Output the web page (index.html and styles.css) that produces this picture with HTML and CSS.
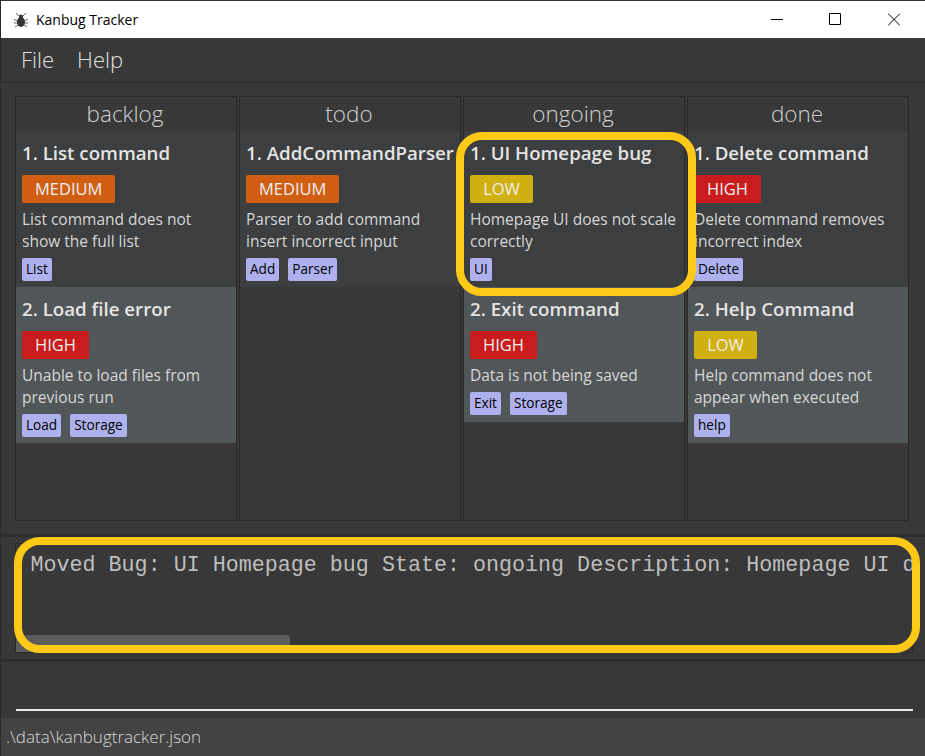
FILE: index.html
```html
<!DOCTYPE html>
<html lang="en">
  <head>
    <meta charset="UTF-8" />
    <title>Kanbug Tracker</title>
    <link rel="stylesheet" href="styles.css">
  </head>
  <body>
    <div class="window">
      <div class="titlebar">
        <svg class="bug" width="16" height="16" viewBox="0 0 16 16">
          <ellipse cx="8" cy="10" rx="4" ry="5" fill="#333" />
          <circle cx="8" cy="4.5" r="2" fill="#333" />
          <path d="M3 1l3 3M13 1l-3 3M1 7l3 2M15 7l-3 2M1 11h3M15 11h-3M2 15l3-2M14 15l-3-2" stroke="#666" stroke-width="1" fill="none" />
        </svg>
        <span class="title">Kanbug Tracker</span>
        <div class="controls">
          <svg width="12" height="13" viewBox="0 0 12 13"><path d="M0 6.5h12" stroke="#000" fill="none" /></svg>
          <svg width="13" height="13" viewBox="0 0 13 13"><path d="M.5.5h11v11h-11z" stroke="#000" fill="none" /></svg>
          <svg width="12" height="13" viewBox="0 0 12 13"><path d="M0 .5l12 12M12 .5l-12 12" stroke="#000" fill="none" /></svg>
        </div>
      </div>

      <div class="menubar">
        <span>File</span>
        <span>Help</span>
      </div>

      <div class="board">
        <div class="column">
          <div class="col-head">backlog</div>
          <div class="card">
            <div class="card-title">1. List command</div>
            <div class="badge medium">MEDIUM</div>
            <div class="desc">List command does not show the full list</div>
            <div class="tags"><span>List</span></div>
          </div>
          <div class="card alt">
            <div class="card-title">2. Load file error</div>
            <div class="badge high">HIGH</div>
            <div class="desc">Unable to load files from previous run</div>
            <div class="tags"><span>Load</span><span>Storage</span></div>
          </div>
        </div>
        <div class="column">
          <div class="col-head">todo</div>
          <div class="card">
            <div class="card-title">1. AddCommandParser</div>
            <div class="badge medium">MEDIUM</div>
            <div class="desc">Parser to add command insert incorrect input</div>
            <div class="tags"><span>Add</span><span>Parser</span></div>
          </div>
        </div>
        <div class="column">
          <div class="col-head">ongoing</div>
          <div class="card">
            <div class="card-title">1. UI Homepage bug</div>
            <div class="badge low">LOW</div>
            <div class="desc">Homepage UI does not scale correctly</div>
            <div class="tags"><span>UI</span></div>
          </div>
          <div class="card alt short">
            <div class="card-title">2. Exit command</div>
            <div class="badge high">HIGH</div>
            <div class="desc">Data is not being saved</div>
            <div class="tags"><span>Exit</span><span>Storage</span></div>
          </div>
        </div>
        <div class="column">
          <div class="col-head">done</div>
          <div class="card">
            <div class="card-title">1. Delete command</div>
            <div class="badge high">HIGH</div>
            <div class="desc">Delete command removes incorrect index</div>
            <div class="tags"><span>Delete</span></div>
          </div>
          <div class="card alt">
            <div class="card-title">2. Help Command</div>
            <div class="badge low">LOW</div>
            <div class="desc">Help command does not appear when executed</div>
            <div class="tags"><span>help</span></div>
          </div>
        </div>
      </div>

      <div class="result">
        <div class="result-box">
          <div class="result-text">Moved Bug: UI Homepage bug State: ongoing Description: Homepage UI does not scale correctly</div>
          <div class="thumb"></div>
        </div>
      </div>

      <div class="command"><div class="command-line"></div></div>
      <div class="status">.\data\kanbugtracker.json</div>

      <div class="mark mark-card"></div>
      <div class="mark mark-result"></div>
    </div>
  </body>
</html>
```

FILE: styles.css
```css
* {
  box-sizing: border-box;
}
html,
body {
  margin: 0;
  padding: 0;
  background-color: #383838;
}
.window {
  position: relative;
  width: 925px;
  height: 756px;
  overflow: hidden;
  font-family: "Open Sans", "Noto Sans", sans-serif;
  background-color: #383838;
  border-left: 1px solid #2b2b2b;
}
.titlebar {
  display: flex;
  align-items: center;
  height: 38px;
  padding-left: 12px;
  background-color: #fff;
  border-top: 1px solid #333;
  color: #000;
}
.bug {
  margin-right: 7px;
}
.title {
  font-size: 14px;
}
.controls {
  display: flex;
  margin-left: auto;
  margin-right: 25px;
  gap: 46px;
}
.menubar {
  display: flex;
  align-items: center;
  gap: 23px;
  height: 45px;
  padding: 0 0 2px 20px;
  font-size: 22px;
  font-weight: 300;
  color: #e0e0e0;
  border-bottom: 1px solid #2a2a2a;
}
.board {
  display: flex;
  gap: 2px;
  height: 454px;
  padding: 13px 0 0 14px;
  border-bottom: 3px solid #2e2e2e;
}
.column {
  width: 222px;
  height: 425px;
  border: 1px solid #2a2a2a;
}
.col-head {
  height: 34px;
  padding-right: 2px;
  line-height: 34px;
  text-align: center;
  font-size: 22.5px;
  font-weight: 300;
  color: #d0d0d0;
}
.card {
  height: 156px;
  padding: 9px 6px 0;
  background-color: #3c3e3f;
  color: #dcdcdc;
}
.card.alt {
  background-color: #515658;
}
.card.short {
  height: 135px;
}
.card-title {
  font-size: 18.7px;
  font-weight: 600;
  line-height: 26px;
  color: #e4e4e4;
  white-space: nowrap;
}
.badge {
  width: fit-content;
  min-width: 63px;
  height: 28px;
  margin-top: 9px;
  padding: 0 13px;
  line-height: 28px;
  text-align: center;
  font-size: 16.5px;
  font-weight: 500;
  color: #eee;
  border-radius: 2px;
}
.medium {
  background-color: #d05e13;
}
.high {
  background-color: #c91c1c;
}
.low {
  background-color: #cfb010;
}
.desc {
  margin-top: 5px;
  font-size: 15.5px;
  line-height: 22px;
  color: #d6d6d6;
}
.tags {
  display: flex;
  gap: 9px;
  margin-top: 6px;
}
.tags span {
  height: 23px;
  padding: 0 4px;
  line-height: 22px;
  font-size: 13.6px;
  color: #000;
  background-color: #aeb1ed;
  border-radius: 2px;
}
.result {
  height: 125px;
  padding: 6px 12px 0 14px;
  border-bottom: 3px solid #2e2e2e;
}
.result-box {
  position: relative;
  height: 110px;
  overflow: hidden;
  border: 1px solid #2a2a2a;
}
.result-text {
  padding: 9px 14.5px;
  font-family: "Liberation Mono", monospace;
  font-size: 21.7px;
  color: #bdbdbd;
  white-space: nowrap;
}
.thumb {
  position: absolute;
  left: 0;
  bottom: 0;
  width: 274px;
  height: 17px;
  background-color: #5c5c5c;
  border-radius: 0 3px 0 0;
}
.command {
  height: 56px;
  padding: 47px 12px 0 15px;
}
.command-line {
  height: 2px;
  background-color: #e8e8e8;
}
.status {
  height: 38px;
  padding-left: 5px;
  line-height: 38px;
  font-size: 17px;
  font-weight: 300;
  color: #d8d8d8;
  background-color: #434343;
}
.mark {
  position: absolute;
  border: 8px solid #ffc917;
}
.mark-card {
  left: 455px;
  top: 132px;
  width: 240px;
  height: 164px;
  border-radius: 26px;
}
.mark-result {
  left: 13px;
  top: 537px;
  width: 906px;
  height: 116px;
  border-radius: 26px;
}
```
